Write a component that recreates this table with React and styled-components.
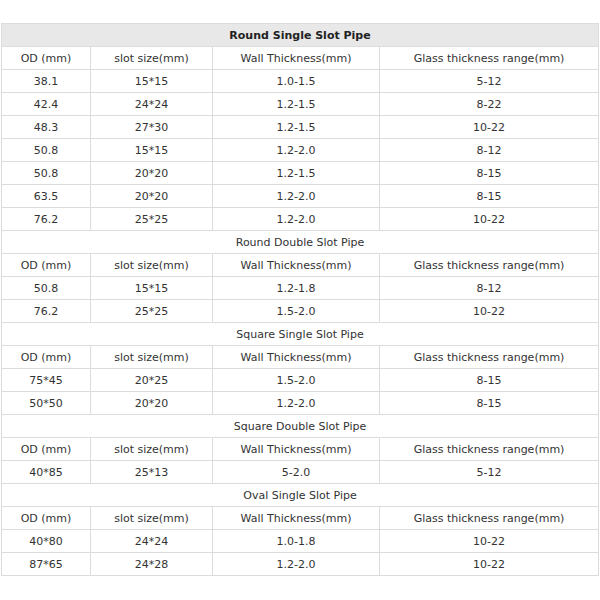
import React from "react";
import styled, { createGlobalStyle } from "styled-components";

const Global = createGlobalStyle`
  html, body { margin: 0; padding: 0; background: #fff; }
`;

const Page = styled.div`
  padding: 23px 2px 0 1px;
  font-family: "DejaVu Sans", Verdana, sans-serif;
`;

const Table = styled.table`
  width: 597px;
  border-collapse: collapse;
  table-layout: fixed;
  font-size: 11px;
  color: #333;
`;

const Col = styled.col`
  width: ${(p) => p.$w}px;
`;

const Cell = styled.td`
  border: 1px solid #dcdcdc;
  height: 22px;
  padding: 1px 0 0;
  box-sizing: border-box;
  text-align: center;
  vertical-align: middle;
  line-height: 21px;
  white-space: nowrap;
`;

const TitleCell = styled(Cell)`
  background: ${(p) => (p.$shaded ? "#e8e8e8" : "#fff")};
  font-weight: ${(p) => (p.$bold ? "bold" : "normal")};
  color: ${(p) => (p.$bold ? "#222" : "#333")};
`;

const widths = [89, 122, 167, 219];
const headers = ["OD (mm)", "slot size(mm)", "Wall Thickness(mm)", "Glass thickness range(mm)"];

const sections = [
  {
    title: "Round Single Slot Pipe",
    main: true,
    rows: [
      ["38.1", "15*15", "1.0-1.5", "5-12"],
      ["42.4", "24*24", "1.2-1.5", "8-22"],
      ["48.3", "27*30", "1.2-1.5", "10-22"],
      ["50.8", "15*15", "1.2-2.0", "8-12"],
      ["50.8", "20*20", "1.2-1.5", "8-15"],
      ["63.5", "20*20", "1.2-2.0", "8-15"],
      ["76.2", "25*25", "1.2-2.0", "10-22"],
    ],
  },
  {
    title: "Round Double Slot Pipe",
    rows: [
      ["50.8", "15*15", "1.2-1.8", "8-12"],
      ["76.2", "25*25", "1.5-2.0", "10-22"],
    ],
  },
  {
    title: "Square Single Slot Pipe",
    rows: [
      ["75*45", "20*25", "1.5-2.0", "8-15"],
      ["50*50", "20*20", "1.2-2.0", "8-15"],
    ],
  },
  {
    title: "Square Double Slot Pipe",
    rows: [["40*85", "25*13", "5-2.0", "5-12"]],
  },
  {
    title: "Oval Single Slot Pipe",
    rows: [
      ["40*80", "24*24", "1.0-1.8", "10-22"],
      ["87*65", "24*28", "1.2-2.0", "10-22"],
    ],
  },
];

export default function App() {
  return (
    <Page>
      <Global />
      <Table>
        <colgroup>
          {widths.map((w, i) => (
            <Col key={i} $w={w} />
          ))}
        </colgroup>
        <tbody>
          {sections.map((s) => (
            <React.Fragment key={s.title}>
              <tr>
                <TitleCell colSpan={4} $shaded={s.main} $bold={s.main}>
                  {s.title}
                </TitleCell>
              </tr>
              <tr>
                {headers.map((h) => (
                  <Cell key={h}>{h}</Cell>
                ))}
              </tr>
              {s.rows.map((r, i) => (
                <tr key={i}>
                  {r.map((c, j) => (
                    <Cell key={j}>{c}</Cell>
                  ))}
                </tr>
              ))}
            </React.Fragment>
          ))}
        </tbody>
      </Table>
    </Page>
  );
}
